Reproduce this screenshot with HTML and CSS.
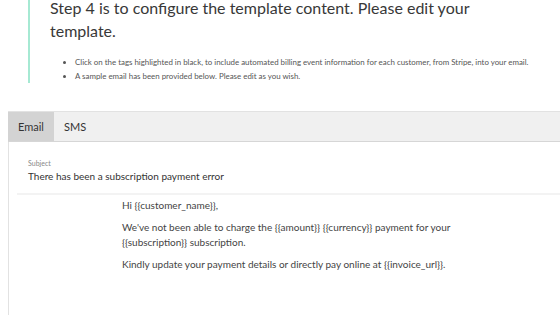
FILE: index.html
```html
<!DOCTYPE html>
<html>
<head>
	<meta charset="UTF-8">
	<title>Template</title>
	<link rel="stylesheet" href="styles.css">
</head>
<body>
	<div class="step">
		<h2 class="step-title">Step 4 is to configure the template content. Please edit your template.</h2>
		<ul class="step-notes">
			<li>Click on the tags highlighted in black, to include automated billing event information for each customer, from Stripe, into your email.</li>
			<li>A sample email has been provided below. Please edit as you wish.</li>
		</ul>
	</div>

	<div class="editor">
		<div class="tabs">
			<span class="tab active">Email</span>
			<span class="tab">SMS</span>
		</div>
		<div class="panel">
			<div class="subject">
				<div class="subject-label">Subject</div>
				<div class="subject-value">There has been a subscription payment error</div>
			</div>
			<div class="mail-body">
				<p>Hi {{customer_name}},</p>
				<p>We've not been able to charge the {{amount}} {{currency}} payment for your<br>{{subscription}} subscription.</p>
				<p>Kindly update your payment details or directly pay online at {{invoice_url}}.</p>
			</div>
		</div>
	</div>
</body>
</html>
```

FILE: styles.css
```css
body,div,ul,li,h2,p{
	margin: 0;
	padding: 0;
}
body{
	font-family: Lato, "Noto Sans", sans-serif;
	color: #333;
	background: #fff;
	overflow: hidden;
}
.step{
	margin: -4px 0 0 28px;
	padding-left: 20px;
	border-left: 2px solid #a6e9d3;
}
.step-title{
	max-width: 440px;
	font-size: 16px;
	font-weight: 400;
	line-height: 23px;
	color: #383838;
}
.step-notes{
	margin-top: 13px;
	padding-left: 25px;
	font-size: 7.9px;
	line-height: 14px;
	color: #555;
}
.editor{
	margin: 28px 0 0 8px;
}
.tabs{
	display: flex;
	height: 29px;
	background: #f0f0f0;
	border-top: 1px solid #e2e2e2;
	border-bottom: 1px solid #d6d6d6;
}
.tab{
	display: flex;
	align-items: center;
	padding: 0 10px;
	font-size: 11px;
	color: #333;
}
.tab.active{
	background: #d3d3d3;
}
.panel{
	height: 180px;
	border-left: 1px solid #e2e2e2;
}
.subject{
	margin-left: 8px;
	padding: 16px 0 9px 11px;
	border-bottom: 2px solid #f3f3f3;
}
.subject-label{
	font-size: 7px;
	line-height: 11px;
	color: #888;
}
.subject-value{
	font-size: 10px;
	line-height: 15px;
	color: #333;
}
.mail-body{
	padding: 3px 0 0 113px;
	font-size: 10px;
	line-height: 15px;
	color: #444;
}
.mail-body p{
	margin-bottom: 7px;
}
```
